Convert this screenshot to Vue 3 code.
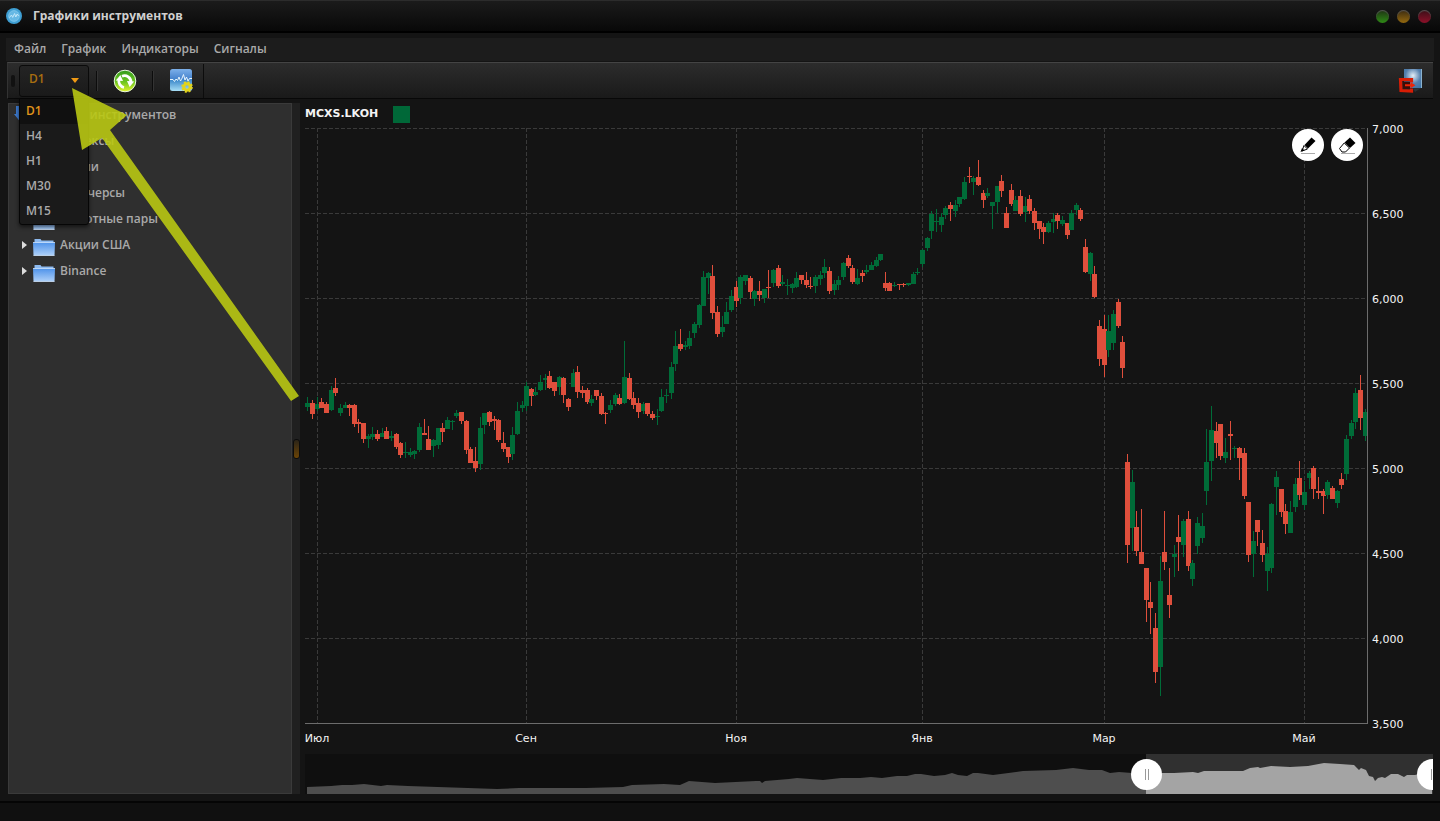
<script setup>
import { ref } from 'vue'

const menus = ['Файл', 'График', 'Индикаторы', 'Сигналы']
const frames = ['D1', 'H4', 'H1', 'M30', 'M15']
const frame = ref('D1')
const groups = ['Индексы', 'Акции', 'Фьючерсы', 'Валютные пары', 'Акции США', 'Binance']

const prices = ['7,000', '6,500', '6,000', '5,500', '5,000', '4,500', '4,000', '3,500']
const rows = [128, 213, 298, 383, 468, 553, 638, 723]
const months = [
  { name: 'Июл', x: 317 },
  { name: 'Сен', x: 526 },
  { name: 'Ноя', x: 736 },
  { name: 'Янв', x: 922 },
  { name: 'Мар', x: 1104 },
  { name: 'Май', x: 1304 }
]
const LEFT = 305
const WIDTH = 1063

// direction, high, body top, body bottom, low
const series = `g397,403,407,411 r400,403,414,419 g397,404,409,411 r398,402,408,408 r402,404,413,413
g386,390,410,411 r378,388,393,396 g404,408,413,416 g402,405,408,408 r404,405,408,416
r404,405,424,427 r419,422,424,433 r423,423,439,443 g434,436,439,448 g427,434,437,440
r430,434,439,441 g428,433,437,437 r427,431,439,439 g431,436,438,441 r433,434,447,449
r442,443,455,458 g442,452,453,458 g448,452,455,457 g450,451,454,459 g423,427,450,452
r419,433,435,435 r426,439,450,450 g439,440,446,457 g428,428,445,449 r423,428,432,442
g417,420,429,429 g420,421,422,430 g410,413,416,418 r412,412,421,424 r420,421,450,454
r447,449,463,463 r447,461,468,472 g417,428,464,470 g413,413,425,434 r411,412,422,426
r416,419,421,430 r419,420,440,442 r432,443,449,452 r447,447,457,463 g427,435,454,460
g402,411,434,435 g401,405,408,412 g382,386,406,411 r388,389,396,406 g387,392,395,396
g375,382,390,391 g374,378,380,390 r371,376,388,389 r382,382,391,396 g376,377,387,395
r377,378,395,403 r398,399,407,411 g369,373,387,387 r366,372,392,398 r386,390,393,398
r388,390,402,404 g395,399,403,406 r390,390,396,400 r393,396,414,415 r412,413,414,424
g400,405,410,413 g393,395,404,406 r394,398,404,405 g341,377,403,404 r373,378,399,400
r392,398,405,409 r398,403,412,418 g402,404,411,414 r403,403,414,416 r411,414,418,420
g409,416,417,425 g389,397,411,412 g389,395,396,403 g362,367,393,399 g331,346,364,371
r329,344,349,351 g341,345,347,350 g331,338,346,349 g322,324,333,338 g304,305,325,328
g271,277,306,306 g272,273,278,294 r265,276,313,319 r306,312,334,337 g316,327,332,337
g302,312,324,324 g290,296,310,312 r281,287,301,307 g275,277,298,304 g275,275,281,285
r276,278,292,299 g290,291,299,306 r281,291,295,301 g289,289,298,303 r270,287,288,298
g269,270,283,287 r265,268,286,288 g275,282,284,286 g279,285,286,295 g283,284,288,293
g272,278,287,288 r275,275,280,284 r272,280,285,288 r277,286,287,289 g275,277,286,293
g271,275,279,285 g259,267,273,278 r267,271,291,294 g280,284,290,295 g276,280,285,290
g262,263,277,280 r255,258,266,268 r265,268,282,284 g269,278,284,285 r270,273,276,282
g265,270,272,274 g262,265,270,270 g257,260,266,267 g254,254,260,261 r272,283,288,291
r282,283,291,291 g282,285,286,287 r284,284,285,290 r283,284,285,287 g283,283,285,286
g272,274,284,284 g268,272,273,275 g249,250,264,267 g237,238,248,251 g211,214,231,239
g209,221,222,232 g213,217,225,232 g206,208,215,219 r202,205,209,221 g200,205,211,217
g197,197,204,207 g177,182,199,200 r167,176,177,183 g176,178,182,195 r160,177,185,186
r190,193,200,208 g188,193,196,198 g202,202,206,229 g186,186,202,213 r175,181,191,197
r207,213,228,228 r184,190,204,206 g196,200,211,211 r190,196,214,216 g197,206,212,222
r195,199,211,214 r208,211,223,230 r221,221,229,239 r223,227,232,244 g221,223,232,233
g213,219,222,233 r213,215,221,229 g216,220,224,226 r223,223,235,239 g210,213,230,230
g203,205,210,215 r208,210,219,221 r239,247,272,273 g252,253,274,281 r266,274,297,298
r320,326,359,366 r315,329,365,377 g315,331,350,357 g310,314,343,350 r299,302,326,328
r336,342,368,378 r454,462,545,563 g470,482,528,551 r511,527,551,556 r509,552,564,564
r568,568,600,622 r582,602,608,634 r613,628,672,683 g556,581,667,696 r511,552,562,570
r568,595,605,618 g545,554,557,577 r515,537,542,571 g519,521,545,557 r511,519,566,571
g560,563,579,586 g517,523,546,554 g513,526,538,543 g429,462,491,505 g406,430,461,481
r422,431,443,458 r424,424,456,460 g438,452,458,463 r421,434,436,460 g446,448,449,458
r447,448,458,480 r448,453,496,499 r502,502,555,562 g531,541,554,577 r520,520,532,546
r530,543,555,562 g547,554,571,591 g503,504,568,573 g471,477,487,515 r489,489,512,517
r504,511,524,534 g501,512,533,533 g478,484,507,512 r461,478,495,500 g481,492,505,510
g471,473,478,489 r466,468,489,499 r477,491,493,499 r489,491,496,514 g480,482,495,499
r486,488,499,499 g490,491,503,508 r473,479,485,489 g435,439,474,480 g420,423,436,439
g388,393,422,429 r375,390,418,430 g409,412,436,441`

const candles = series.split(/\s+/).map((item, i) => {
  const [high, top, bottom, low] = item.slice(1).split(',').map(Number)
  return { up: item[0] === 'g', x: 307 + Math.ceil(i * 4.658 - 0.25), high, top, bottom, low }
})

const history =
  '307,787 331,786 342,785 352,785 364,784 381,786 387,785 408,786 438,787 468,788 497,789 519,788 549,788 586,788 623,787 632,785 664,784 680,785 689,781 715,783 756,781 760,781 762,783 765,781 789,779 797,778 823,780 841,778 860,778 871,777 882,778 897,776 907,776 915,774 921,774 934,776 945,775 952,773 958,775 967,776 973,773 978,773 993,775 1023,771 1056,770 1073,768 1089,770 1102,770 1110,773 1119,772 1132,773 1146,773'
const recent =
  '1146,773 1174,773 1193,772 1198,773 1204,771 1243,771 1250,768 1258,767 1260,768 1271,766 1290,767 1308,766 1324,763 1340,764 1354,765 1359,770 1361,768 1366,770 1369,776 1373,777 1375,781 1378,778 1382,777 1385,778 1391,774 1398,774 1404,777 1407,775 1415,775 1422,773 1432,774'
</script>

<template>
  <div class="window">
    <header class="titlebar">
      <svg class="logo" viewBox="0 0 16 16" width="16" height="16">
        <circle cx="8" cy="8" r="8" fill="#3f9fd3" />
        <circle cx="8" cy="8" r="5.4" fill="#66b8e4" stroke="#8fd0f2" stroke-width=".6" />
        <path d="M3.5 9.5 5.5 7l1.2 2.4L8.6 5.5 9.8 9l1.4-3 1.4 2" fill="none" stroke="#c9ebfb" stroke-width=".9" />
      </svg>
      <h1>Графики инструментов</h1>
      <div class="lights">
        <button class="light green" aria-label="Свернуть"></button>
        <button class="light amber" aria-label="Развернуть"></button>
        <button class="light red" aria-label="Закрыть"></button>
      </div>
    </header>

    <nav class="menubar">
      <button v-for="m in menus" :key="m">{{ m }}</button>
    </nav>

    <div class="toolbar">
      <span class="grip"></span>
      <div class="period">
        <select v-model="frame" aria-label="Период">
          <option v-for="f in frames" :key="f">{{ f }}</option>
        </select>
        <svg class="caret" viewBox="0 0 8 5" width="8" height="5"><path d="M0 0h8L4 5z" fill="#f09a14" /></svg>
        <ul class="options">
          <li v-for="f in frames" :key="f">
            <button :class="{ current: f === frame }" @click="frame = f">{{ f }}</button>
          </li>
        </ul>
        <svg class="pointer" viewBox="72 88 228 314" width="228" height="314">
          <polygon points="72,88 127,115 110,130 299,396 291,401 102,138 82,150" fill="#b9c813" fill-opacity=".9" />
        </svg>
      </div>
      <span class="sep"></span>
      <button class="tool" aria-label="Обновить">
        <svg viewBox="0 0 24 24" width="24" height="24">
          <defs>
            <linearGradient id="gr" x1="0" y1="0" x2="0" y2="1">
              <stop offset="0" stop-color="#2f9a1c" />
              <stop offset=".55" stop-color="#6fc61f" />
              <stop offset="1" stop-color="#e4f52c" />
            </linearGradient>
          </defs>
          <circle cx="12" cy="12" r="10.8" fill="url(#gr)" stroke="#e9f6df" stroke-width="1" />
          <path d="M11 18.500A6.500 6.500 0 0 1 6 10.500" fill="none" stroke="#fff" stroke-width="2.800" />
          <path d="M2.800 11.500 7.400 6 10 12z" fill="#fff" />
          <path d="M9 7.200A6.500 6.500 0 0 1 18 13.500" fill="none" stroke="#fff" stroke-width="2.800" />
          <path d="M21.200 12.500 16.600 18 14 12z" fill="#fff" />
        </svg>
      </button>
      <span class="sep"></span>
      <button class="tool" aria-label="Настройки индикаторов">
        <svg viewBox="0 0 24 24" width="24" height="24">
          <defs>
            <linearGradient id="bl" x1="0" y1="0" x2="0" y2="1">
              <stop offset="0" stop-color="#7db0ea" />
              <stop offset=".42" stop-color="#4a86cf" />
              <stop offset=".5" stop-color="#3c88ca" />
              <stop offset="1" stop-color="#a7def6" />
            </linearGradient>
          </defs>
          <rect x="1" y="0" width="22" height="22" rx="2.5" fill="url(#bl)" />
          <path d="M1 10.5h3l1.5 2 1.5-2.5 1.5 1.5L10 8l1.5 4 1-1.500 2-5L16 11l1.500-3 1.500 4 1.500-2.500H23" fill="none" stroke="#e8f5ff" />
          <circle cx="18" cy="18" r="3.2" fill="none" stroke="#e3d41b" stroke-width="3" />
          <circle cx="18" cy="18" r="4.8" fill="none" stroke="#e3d41b" stroke-width="2" stroke-dasharray="2 1.77" />
        </svg>
      </button>
      <span class="edge"></span>
      <button class="tool exit" aria-label="Выход">
        <svg viewBox="0 0 24 24" width="24" height="24">
          <defs>
            <radialGradient id="sq" cx=".5" cy=".35" r=".7">
              <stop offset="0" stop-color="#e4eef7" />
              <stop offset=".6" stop-color="#5580ad" />
              <stop offset="1" stop-color="#3f74a6" />
            </radialGradient>
          </defs>
          <path d="M6 0h18v19H6z" fill="url(#sq)" />
          <path d="M23.500 0v19" stroke="#8bb3cf" />
          <path d="M15 19.500l8-.5-6 4z" fill="#2c3136" />
          <path d="M13.500 13.500V10.500H2.500L3 21.500 13.500 22V19.500" fill="none" stroke="#d81d05" stroke-width="3.200" />
          <path d="M5 12.500h7v7H5z" fill="#3a0d08" />
          <path d="M7 15.300h5.500v-2l5 3-5 3v-2H7z" fill="#ee2406" />
        </svg>
      </button>
    </div>

    <main class="work">
      <aside class="tree">
        <div class="node root">
          <svg viewBox="0 0 16 18" width="16" height="18"><path d="M2 0h8v8h6l-8 10-8-10h2z" fill="#3d7bd0" /></svg>
          <span>Список инструментов</span>
        </div>
        <div v-for="g in groups" :key="g" class="node">
          <svg class="twist" viewBox="0 0 5 8" width="5" height="8"><path d="M0 0l5 4-5 4z" fill="#dcdcdc" /></svg>
          <svg class="folder" viewBox="0 0 22 18" width="22" height="18">
            <defs>
              <linearGradient id="fo" x1="0" y1="0" x2="0" y2="1">
                <stop offset="0" stop-color="#4f93ea" />
                <stop offset="1" stop-color="#aed0f8" />
              </linearGradient>
            </defs>
            <path d="M1.500 5V1h6l1 1.500h12V5z" fill="#8dbaf0" />
            <path d="M0 4.500h22l-.5 13H.5z" fill="url(#fo)" />
            <path d="M0 4.500h22M.5 17.500h21" stroke="#cfe3fb" stroke-width=".8" />
          </svg>
          <span>{{ g }}</span>
        </div>
      </aside>

      <div class="splitter"><span></span></div>

      <section class="chart">
        <div class="legend">
          <strong>MCXS.LKOH</strong><i></i>
        </div>
        <div class="plotrow">
          <div class="plot">
            <svg viewBox="305 128 1063 596" preserveAspectRatio="none" shape-rendering="crispEdges">
              <g class="grid">
                <line v-for="y in rows" :key="y" x1="305" x2="1367" :y1="y + 0.5" :y2="y + 0.5" />
                <line v-for="m in months" :key="m.name" y1="128" y2="723" :x1="m.x + 0.5" :x2="m.x + 0.5" />
              </g>
              <g v-for="(c, i) in candles" :key="i" :class="c.up ? 'up' : 'down'">
                <rect :x="c.x" :y="c.high" width="1" :height="c.low - c.high" />
                <rect :x="c.x - 2" :y="c.top" width="5" :height="c.bottom - c.top" />
              </g>
              <path class="axis" d="M305 723.500H1367.500V128" />
            </svg>
            <div class="drawtools">
              <button aria-label="Карандаш">
                <svg viewBox="0 0 18 18" width="18" height="18">
                  <path d="M12.500 1.500 16.500 5 9 12.500 5.500 9z" fill="#000" />
                  <path d="M5 9.500 8.500 13 3 15z" fill="#fff" stroke="#000" />
                  <path d="M1.500 16l1.500-4 2.500 2.500z" fill="#000" />
                  <path d="M2 17.500h14" stroke="#aaa" />
                </svg>
              </button>
              <button aria-label="Ластик">
                <svg viewBox="0 0 18 18" width="18" height="18">
                  <path d="M12 1.500 17.500 7 12 12 6.500 6.500z" fill="#000" />
                  <path d="M6.200 7 11.500 12 7.500 16H4L1.500 12.500z" fill="#fff" stroke="#000" />
                  <path d="M3 17.500h14" stroke="#aaa" />
                </svg>
              </button>
            </div>
          </div>
          <div class="prices">
            <span v-for="p in prices" :key="p">{{ p }}</span>
          </div>
        </div>
        <div class="months">
          <span v-for="m in months" :key="m.name" :style="{ left: ((m.x - LEFT) / WIDTH) * 100 + '%' }">{{ m.name }}</span>
        </div>
        <div class="navigator">
          <svg viewBox="305 754 1128 40" preserveAspectRatio="none">
            <rect x="1146" y="754" width="287" height="40" fill="#303030" />
            <polygon :points="`307,794 ${history} 1146,794`" fill="#4e4e4e" />
            <polygon :points="`1146,794 ${recent} 1432,794`" fill="#a4a4a4" />
          </svg>
          <button class="handle start" aria-label="Начало диапазона"></button>
          <button class="handle end" aria-label="Конец диапазона"></button>
        </div>
      </section>
    </main>

    <footer class="status"></footer>
  </div>
</template>

<style>
body {
  background: #141414;
}
</style>

<style scoped>
.window {
  box-sizing: border-box;
  min-height: 100vh;
  display: flex;
  flex-direction: column;
  background: #141414;
  color: #a9a9a9;
  font: 600 12px/16px "Open Sans", "Noto Sans", sans-serif;
  overflow: hidden;
}
button,
select {
  appearance: none;
  border: 0;
  padding: 0;
  margin: 0;
  background: none;
  color: inherit;
  font: inherit;
}
.titlebar {
  height: 30px;
  display: flex;
  align-items: center;
  gap: 11px;
  padding: 0 9px 0 6px;
  border-top: 1px solid #2c2c2c;
  border-bottom: 2px solid #000;
  background: linear-gradient(#1b1b1b, #080808);
}
h1 {
  margin: 0;
  flex: 1;
  font: inherit;
  font-weight: 700;
  color: #cfcfcf;
}
.lights {
  display: flex;
  gap: 8px;
}
.light {
  width: 13px;
  height: 13px;
  border-radius: 50%;
  box-shadow: inset 0 1px 1px #555;
}
.green {
  background: linear-gradient(#1d3313, #2f8a16);
}
.amber {
  background: linear-gradient(#3b2b10, #94690f);
}
.red {
  background: linear-gradient(#3b0f17, #8c1029);
}
.menubar {
  display: flex;
  align-items: center;
  gap: 15px;
  box-sizing: border-box;
  height: 23px;
  margin: 5px 6px 0;
  padding: 0 8px 2px;
  background: #1c1c1c;
}
.toolbar {
  display: flex;
  align-items: center;
  height: 35px;
  margin: 1px 7px 0;
  border-top: 1px solid #444;
  border-left: 1px solid #333;
  border-bottom: 1px solid #080808;
  background: linear-gradient(#2c2c2c, #1a1a1a);
}
.grip {
  width: 4px;
  height: 12px;
  margin: 0 4px 0 3px;
  border-radius: 2px;
  background: #111;
}
.period {
  position: relative;
  width: 70px;
}
select {
  display: block;
  box-sizing: border-box;
  width: 70px;
  height: 32px;
  padding: 0 9px 4px;
  border: 1px solid #0a0a0a;
  border-radius: 3px;
  background: linear-gradient(#242424, #1a1a1a);
  color: #a96f10;
}
.caret {
  position: absolute;
  right: 10px;
  top: 13px;
}
.options {
  position: absolute;
  z-index: 3;
  top: 33px;
  left: 0;
  width: 68px;
  margin: 0;
  padding: 0;
  list-style: none;
  border: 1px solid #060606;
  border-radius: 0 0 3px 3px;
  background: #1a1a1a;
  box-shadow: 0 2px 4px rgba(0, 0, 0, 0.6);
}
.options button {
  display: block;
  width: 100%;
  height: 25px;
  padding: 0 6px;
  text-align: left;
}
.options .current {
  background: #101010;
  color: #e0951a;
}
.pointer {
  position: absolute;
  z-index: 4;
  top: 23px;
  left: 53px;
  pointer-events: none;
}
.sep {
  width: 1px;
  height: 20px;
  margin: 0 15px 0 7px;
  background: #0c0c0c;
  border-right: 1px solid #333;
}
.tool {
  width: 24px;
  height: 24px;
}
.tool svg,
.plot svg,
.navigator svg {
  display: block;
}
.tool + .sep {
  margin-left: 15px;
}
.edge {
  width: 1px;
  height: 34px;
  margin-left: 10px;
  background: #0c0c0c;
}
.exit {
  margin: 0 11px 0 auto;
}
.work {
  flex: 1;
  display: flex;
  margin: 4px 7px 0 8px;
}
.tree {
  box-sizing: border-box;
  width: 284px;
  border: 1px solid #3a3a3a;
  background: #2f2f2f;
}
.node {
  display: flex;
  align-items: center;
  height: 26px;
  padding-left: 13px;
}
.twist {
  margin-right: 6px;
}
.node span {
  margin-left: 5px;
}
.folder {
  margin-top: 4px;
}
.root {
  height: 22px;
  margin-bottom: 2px;
  padding-left: 5px;
}
.root span {
  margin-left: 13px;
}
.splitter {
  display: flex;
  align-items: center;
  justify-content: center;
  width: 8px;
  margin-right: 5px;
  background: #202020;
}
.splitter span {
  box-sizing: border-box;
  width: 7px;
  height: 20px;
  border: 1px solid #0c0c0c;
  border-radius: 3px;
  background: linear-gradient(#2b2418, #6b4406);
}
.chart {
  flex: 1;
  min-width: 0;
  display: flex;
  flex-direction: column;
  color: #f4f4f4;
  font: 11px/14px "DejaVu Sans", sans-serif;
}
.legend {
  display: flex;
  align-items: center;
  gap: 15px;
  height: 22px;
  margin-bottom: 3px;
}
.legend i {
  width: 17px;
  height: 17px;
  background: #006838;
}
.plotrow {
  flex: 1;
  display: flex;
}
.plot {
  position: relative;
  flex: 1;
  min-width: 0;
  min-height: 300px;
}
.plot > svg {
  position: absolute;
  inset: 0;
  width: 100%;
  height: 100%;
}
.grid line {
  stroke: #3a3a3a;
  stroke-dasharray: 4 2;
}
.axis {
  fill: none;
  stroke: #6c6c6c;
}
.up {
  fill: #006c38;
}
.down {
  fill: #df4f3c;
}
.drawtools {
  position: absolute;
  right: 5px;
  top: 1px;
  display: flex;
  gap: 7px;
}
.drawtools button {
  display: flex;
  align-items: center;
  justify-content: center;
  width: 32px;
  height: 32px;
  border-radius: 50%;
  background: #fff;
}
.prices {
  display: flex;
  flex-direction: column;
  justify-content: space-between;
  width: 61px;
  margin: -5px 0 -8px;
  padding-left: 4px;
}
.months {
  position: relative;
  height: 30px;
  margin-right: 65px;
}
.months span {
  position: absolute;
  top: 8px;
  transform: translateX(-50%);
}
.navigator {
  position: relative;
  height: 40px;
  overflow: hidden;
  background: #0f0f0f;
}
.navigator svg {
  width: 100%;
  height: 100%;
}
.handle {
  position: absolute;
  top: 5px;
  width: 31px;
  height: 31px;
  border-radius: 50%;
  background: #fff;
}
.handle::before {
  content: "";
  display: block;
  width: 2px;
  height: 11px;
  margin: 0 auto;
  border: 1px solid #999;
  border-width: 0 1px;
}
.start {
  left: calc(74.6% - 15px);
}
.end {
  right: -15px;
}
.status {
  height: 18px;
  margin-top: 7px;
  border-top: 2px solid #050505;
  background: #101010;
}
</style>
